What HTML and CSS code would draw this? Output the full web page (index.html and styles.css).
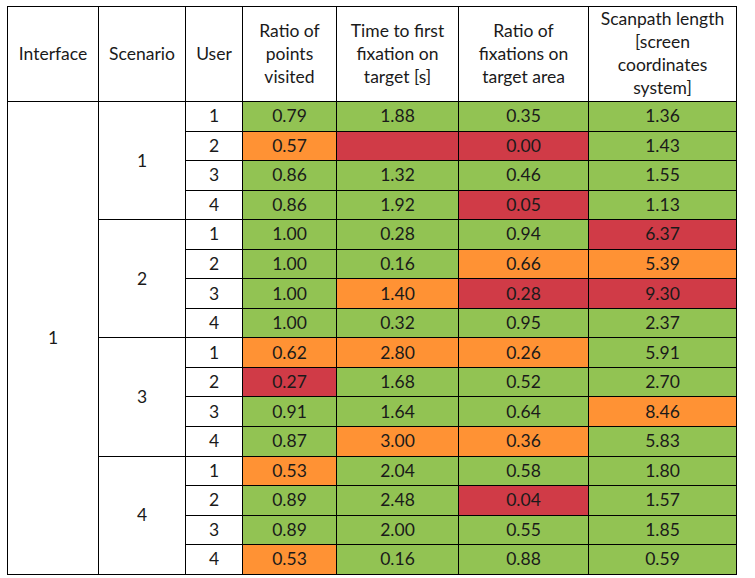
FILE: index.html
```html
<!DOCTYPE html>
<html>
<head>
<meta charset="utf-8">
<link rel="stylesheet" href="styles.css">
</head>
<body>
<table class="results">
  <colgroup>
    <col class="c-int"><col class="c-sc"><col class="c-user"><col class="c-ratio"><col class="c-time"><col class="c-fix"><col class="c-scan">
  </colgroup>
  <thead>
    <tr>
      <th>Interface</th>
      <th>Scenario</th>
      <th>User</th>
      <th>Ratio of<br>points<br>visited</th>
      <th>Time to first<br>fixation on<br>target [s]</th>
      <th>Ratio of<br>fixations on<br>target area</th>
      <th>Scanpath length<br>[screen<br>coordinates<br>system]</th>
    </tr>
  </thead>
  <tbody>
    <tr><td class="lbl" rowspan="16">1</td><td class="lbl" rowspan="4">1</td><td>1</td><td class="g">0.79</td><td class="g">1.88</td><td class="g">0.35</td><td class="g">1.36</td></tr>
    <tr><td>2</td><td class="o">0.57</td><td class="r"></td><td class="r">0.00</td><td class="g">1.43</td></tr>
    <tr><td>3</td><td class="g">0.86</td><td class="g">1.32</td><td class="g">0.46</td><td class="g">1.55</td></tr>
    <tr><td>4</td><td class="g">0.86</td><td class="g">1.92</td><td class="r">0.05</td><td class="g">1.13</td></tr>

    <tr><td class="lbl" rowspan="4">2</td><td>1</td><td class="g">1.00</td><td class="g">0.28</td><td class="g">0.94</td><td class="r">6.37</td></tr>
    <tr><td>2</td><td class="g">1.00</td><td class="g">0.16</td><td class="o">0.66</td><td class="o">5.39</td></tr>
    <tr><td>3</td><td class="g">1.00</td><td class="o">1.40</td><td class="r">0.28</td><td class="r">9.30</td></tr>
    <tr><td>4</td><td class="g">1.00</td><td class="g">0.32</td><td class="g">0.95</td><td class="g">2.37</td></tr>

    <tr><td class="lbl" rowspan="4">3</td><td>1</td><td class="o">0.62</td><td class="o">2.80</td><td class="o">0.26</td><td class="g">5.91</td></tr>
    <tr><td>2</td><td class="r">0.27</td><td class="g">1.68</td><td class="g">0.52</td><td class="g">2.70</td></tr>
    <tr><td>3</td><td class="g">0.91</td><td class="g">1.64</td><td class="g">0.64</td><td class="o">8.46</td></tr>
    <tr><td>4</td><td class="g">0.87</td><td class="o">3.00</td><td class="o">0.36</td><td class="g">5.83</td></tr>

    <tr><td class="lbl" rowspan="4">4</td><td>1</td><td class="o">0.53</td><td class="g">2.04</td><td class="g">0.58</td><td class="g">1.80</td></tr>
    <tr><td>2</td><td class="g">0.89</td><td class="g">2.48</td><td class="r">0.04</td><td class="g">1.57</td></tr>
    <tr><td>3</td><td class="g">0.89</td><td class="g">2.00</td><td class="g">0.55</td><td class="g">1.85</td></tr>
    <tr><td>4</td><td class="o">0.53</td><td class="g">0.16</td><td class="g">0.88</td><td class="g">0.59</td></tr>
  </tbody>
</table>
</body>
</html>
```
FILE: styles.css
```css
html, body {
  margin: 0;
  padding: 0;
  background: #ffffff;
}
body {
  padding: 6px 0 0 7px;
  font-family: "Lato", "Liberation Sans", sans-serif;
  font-size: 17.5px;
  color: #1a1a1a;
}
.results {
  border-collapse: collapse;
  table-layout: fixed;
  width: 730px;
}
.c-int { width: 91px; }
.c-sc { width: 87px; }
.c-user { width: 57px; }
.c-ratio { width: 94px; }
.c-time { width: 122px; }
.c-fix { width: 130px; }
.c-scan { width: 148px; }
.results th,
.results td {
  border: 1px solid #000;
  padding: 0;
  text-align: center;
  vertical-align: middle;
  font-weight: normal;
}
.results thead tr { height: 95px; }
.results th { line-height: 23px; padding-bottom: 2px; }
.results tbody tr { height: 29.56px; }
.results td { line-height: 20px; }
.g { background: #92c353; }
.o { background: #ff9234; }
.r { background: #d03b47; }
```
